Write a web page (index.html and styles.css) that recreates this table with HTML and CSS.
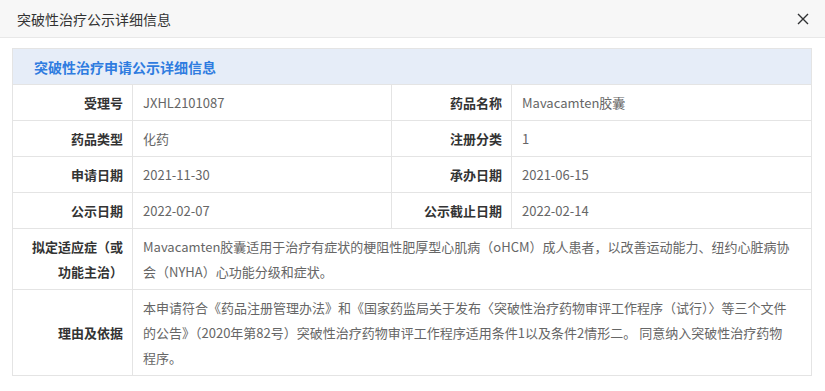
FILE: index.html
```html
<!DOCTYPE html>
<html lang="zh-CN">
<head>
<meta charset="utf-8">
<title>突破性治疗公示详细信息</title>
<link rel="stylesheet" href="styles.css">
</head>
<body>
<div class="dialog">
  <div class="dialog-header">
    <span class="dialog-title">突破性治疗公示详细信息</span>
    <button class="close" aria-label="关闭">
      <svg width="12" height="12" viewBox="0 0 12 12"><path d="M1 1L11 11M11 1L1 11" stroke="#303133" stroke-width="1.4" fill="none"/></svg>
    </button>
  </div>
  <div class="dialog-body">
    <table class="info">
      <colgroup>
        <col class="c-label"><col class="c-val1"><col class="c-label"><col>
      </colgroup>
      <thead>
        <tr><th colspan="4" class="caption">突破性治疗申请公示详细信息</th></tr>
      </thead>
      <tbody>
        <tr><td class="lbl">受理号</td><td class="val">JXHL2101087</td><td class="lbl">药品名称</td><td class="val">Mavacamten胶囊</td></tr>
        <tr><td class="lbl">药品类型</td><td class="val">化药</td><td class="lbl">注册分类</td><td class="val">1</td></tr>
        <tr><td class="lbl">申请日期</td><td class="val">2021-11-30</td><td class="lbl">承办日期</td><td class="val">2021-06-15</td></tr>
        <tr><td class="lbl">公示日期</td><td class="val">2022-02-07</td><td class="lbl">公示截止日期</td><td class="val">2022-02-14</td></tr>
        <tr class="multi"><td class="lbl">拟定适应症（或功能主治）</td><td class="val" colspan="3">Mavacamten胶囊适用于治疗有症状的梗阻性肥厚型心肌病（oHCM）成人患者，以改善运动能力、纽约心脏病协会（NYHA）心功能分级和症状。</td></tr>
        <tr class="multi"><td class="lbl">理由及依据</td><td class="val" colspan="3">本申请符合《药品注册管理办法》和《国家药监局关于发布〈突破性治疗药物审评工作程序（试行）〉等三个文件的公告》（2020年第82号）突破性治疗药物审评工作程序适用条件1以及条件2情形二。 同意纳入突破性治疗药物程序。</td></tr>
      </tbody>
    </table>
  </div>
</div>
</body>
</html>
```

FILE: styles.css
```css
* { box-sizing: border-box; }
html, body { margin: 0; padding: 0; background: #fff; }
body {
  font-family: "Microsoft YaHei", "Noto Sans CJK SC", "Noto Sans", sans-serif;
  color: #333;
  width: 825px;
  height: 391px;
  overflow: hidden;
}
.dialog-header {
  height: 38px;
  background: #f7f7f7;
  border-bottom: 1px solid #e8e8e8;
  display: flex;
  align-items: center;
  justify-content: space-between;
  padding: 0 16px 0 17px;
}
.dialog-title {
  font-size: 14px;
  color: #333;
  line-height: 20px;
}
.close {
  border: 0;
  background: none;
  padding: 0;
  width: 12px;
  height: 12px;
  display: flex;
  cursor: pointer;
}
.dialog-body {
  padding: 10px 13px 0 12px;
}
.info {
  width: 800px;
  border-collapse: collapse;
  table-layout: fixed;
  font-size: 13px;
}
.c-label { width: 120px; }
.c-val1 { width: 259px; }
.info th, .info td {
  border: 1px solid #e4e4e4;
}
.caption {
  background: #e6edf8;
  color: #2f7ce0;
  font-weight: bold;
  font-size: 14px;
  text-align: left;
  height: 36px;
  padding: 0 0 0 21px;
}
.info td {
  height: 36px;
  line-height: 25px;
  padding: 5px 10px;
  vertical-align: middle;
}
.lbl {
  text-align: right;
  font-weight: bold;
  color: #333;
  padding-right: 9px !important;
}
.val {
  color: #666;
  text-align: left;
  padding-right: 17px !important;
}
.multi .lbl { padding-left: 14px; }
```
